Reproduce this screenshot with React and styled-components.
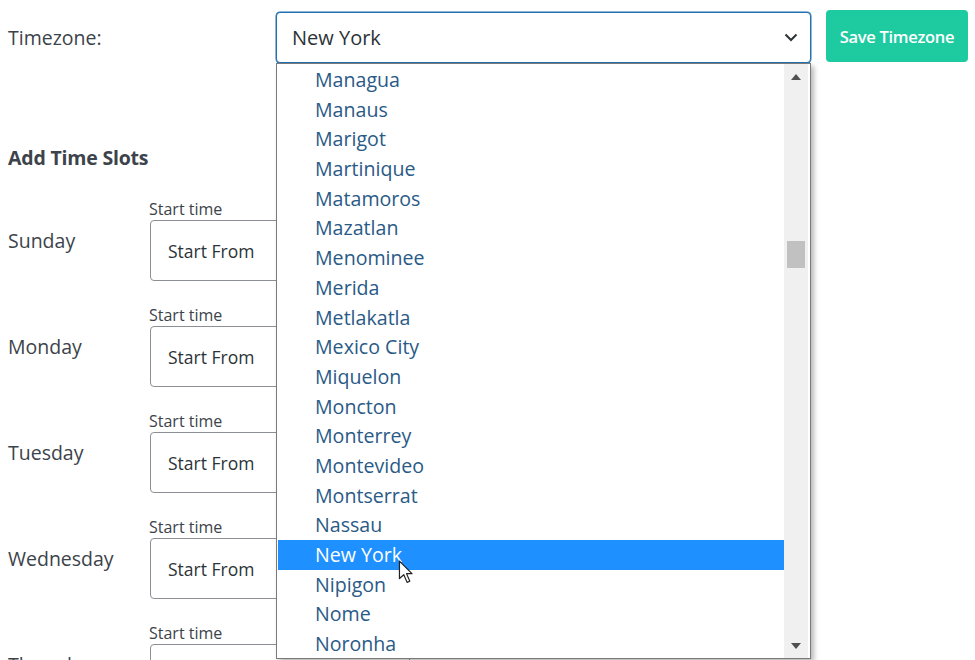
import React from "react";
import styled, { createGlobalStyle } from "styled-components";

const GlobalStyle = createGlobalStyle`
  html, body {
    margin: 0;
    padding: 0;
    background: #ffffff;
    overflow: hidden;
  }
  body {
    font-family: "Open Sans", "Noto Sans", sans-serif;
    color: #3c434a;
  }
`;

const zones = [
  "Managua", "Manaus", "Marigot", "Martinique", "Matamoros", "Mazatlan",
  "Menominee", "Merida", "Metlakatla", "Mexico City", "Miquelon", "Moncton",
  "Monterrey", "Montevideo", "Montserrat", "Nassau", "New York", "Nipigon",
  "Nome", "Noronha", "North Dakota",
];

const days = ["Sunday", "Monday", "Tuesday", "Wednesday", "Thursday"];

const App = () => {
  return (
    <>
      <GlobalStyle />
      <Page>
        <TimezoneRow>
          <FieldLabel>Timezone:</FieldLabel>
          <SelectWrap>
            <Select>
              <span>New York</span>
              <Chevron viewBox="0 0 14 9" width="14" height="9">
                <path d="M1.5 1.5 L7 7 L12.5 1.5" fill="none" stroke="#2c3338" strokeWidth="2" />
              </Chevron>
            </Select>
            <Dropdown>
              <Options>
                {zones.map((z) => (
                  <Option key={z} selected={z === "New York"}>
                    {z}
                  </Option>
                ))}
              </Options>
              <Scrollbar>
                <Arrow viewBox="0 0 10 6" width="10" height="6">
                  <path d="M0 6 L5 0 L10 6 Z" fill="#505050" />
                </Arrow>
                <Track>
                  <Thumb />
                </Track>
                <Arrow viewBox="0 0 10 6" width="10" height="6">
                  <path d="M0 0 L5 6 L10 0 Z" fill="#505050" />
                </Arrow>
              </Scrollbar>
              <Cursor viewBox="0 0 14 22" width="16" height="24">
                <path
                  d="M1 1 L1 17 L5 13.5 L8 20.5 L10.5 19.5 L7.5 12.5 L12.5 12.5 Z"
                  fill="#ffffff"
                  stroke="#222"
                  strokeWidth="1.1"
                  strokeLinejoin="round"
                />
              </Cursor>
            </Dropdown>
          </SelectWrap>
          <SaveButton>Save Timezone</SaveButton>
        </TimezoneRow>

        <Heading>Add Time Slots</Heading>

        <Slots>
          {days.map((d) => (
            <DayRow key={d}>
              <DayLabel>{d}</DayLabel>
              <TimeField>
                <SmallLabel>Start time</SmallLabel>
                <TimeInput>Start From</TimeInput>
              </TimeField>
            </DayRow>
          ))}
        </Slots>
      </Page>
    </>
  );
};

export default App;

const Page = styled.div`
  padding: 10px 8px 0 8px;
  height: 660px;
  box-sizing: border-box;
  overflow: hidden;
`;

const TimezoneRow = styled.div`
  display: flex;
  align-items: flex-start;
`;

const FieldLabel = styled.div`
  flex: none;
  width: 268px;
  font-size: 19.5px;
  line-height: 56px;
  color: #3c434a;
`;

const SelectWrap = styled.div`
  flex: none;
  position: relative;
  width: 535px;
  margin-top: 2px;
  z-index: 5;
`;

const Select = styled.div`
  height: 51px;
  box-sizing: border-box;
  border: 1px solid #2271b1;
  box-shadow: 0 0 0 0.5px #2271b1;
  border-radius: 4px;
  display: flex;
  align-items: center;
  justify-content: space-between;
  padding: 0 12px 0 15px;
  font-size: 20px;
  color: #2c3338;
  background: #fff;
`;

const Chevron = styled.svg`
  display: block;
`;

const Dropdown = styled.div`
  position: absolute;
  top: 100%;
  left: 0;
  width: 535px;
  height: 596px;
  box-sizing: border-box;
  border: 1px solid #7a7a7a;
  background: #fff;
  box-shadow: 3px 3px 5px rgba(0, 0, 0, 0.28);
  display: flex;
  overflow: hidden;
`;

const Options = styled.ul`
  list-style: none;
  margin: 0;
  padding: 1px 0 0 1px;
  flex: 1;
  overflow: hidden;
`;

const Option = styled.li`
  height: 29.7px;
  line-height: 29.7px;
  padding-left: 37px;
  font-size: 19.6px;
  color: ${(p) => (p.selected ? "#ffffff" : "#2a5a86")};
  background: ${(p) => (p.selected ? "#1e90ff" : "transparent")};
  white-space: nowrap;
`;

const Scrollbar = styled.div`
  width: 24px;
  margin-right: 2px;
  background: #f0f0f0;
  display: flex;
  flex-direction: column;
  align-items: center;
  padding: 10px 0 9px;
  box-sizing: border-box;
`;

const Arrow = styled.svg`
  display: block;
  flex: none;
`;

const Track = styled.div`
  flex: 1;
  width: 100%;
  padding-top: 161px;
  box-sizing: border-box;
`;

const Thumb = styled.div`
  width: 18px;
  height: 27px;
  margin: 0 auto;
  background: #c1c1c1;
`;

const Cursor = styled.svg`
  position: absolute;
  left: 121px;
  top: 496px;
`;

const SaveButton = styled.button`
  flex: none;
  margin-left: 15px;
  width: 142px;
  height: 52px;
  padding: 0;
  border: none;
  border-radius: 4px;
  background: #1ecba1;
  color: #ffffff;
  font-family: "Open Sans", "Noto Sans", sans-serif;
  font-size: 16.5px;
  font-weight: 600;
  letter-spacing: -0.3px;
  white-space: nowrap;
  cursor: pointer;
`;

const Heading = styled.h3`
  margin: 80px 0 0 0;
  font-size: 19.5px;
  line-height: 24px;
  font-weight: 700;
  letter-spacing: -0.2px;
  color: #3c434a;
`;

const Slots = styled.div`
  margin-top: 30px;
  display: flex;
  flex-direction: column;
  gap: 25px;
`;

const DayRow = styled.div`
  display: flex;
  align-items: center;
`;

const DayLabel = styled.div`
  width: 141px;
  font-size: 19.5px;
  color: #3c434a;
`;

const TimeField = styled.div`
  display: flex;
  flex-direction: column;
  gap: 1px;
`;

const SmallLabel = styled.label`
  font-size: 16px;
  line-height: 19px;
  color: #3c434a;
`;

const TimeInput = styled.div`
  width: 260px;
  height: 61px;
  box-sizing: border-box;
  margin-left: 1px;
  border: 1px solid #8c8f94;
  border-radius: 4px;
  display: flex;
  align-items: center;
  padding-left: 17px;
  font-size: 17.5px;
  color: #2c3338;
`;
